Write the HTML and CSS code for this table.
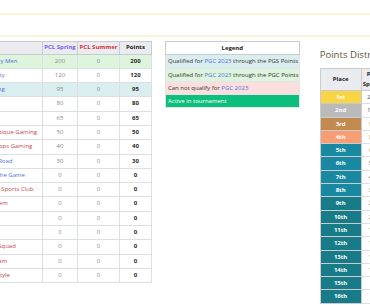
FILE: index.html
```html
<!DOCTYPE html>
<html>
<head>
<meta charset="utf-8">
<link rel="stylesheet" href="styles.css">
</head>
<body>
<div class="notice"></div>
<div class="layout">
  <table class="standings">
    <colgroup><col class="c-team"><col class="c-spring"><col class="c-summer"><col class="c-pts"></colgroup>
    <thead>
      <tr><th class="team">Team</th><th class="spring">PCL Spring</th><th class="summer">PCL Summer</th><th>Points</th></tr>
    </thead>
    <tbody>
      <tr class="bg-pgc"><td class="team"><span class="lk">The Hungry Men</span></td><td>200</td><td>0</td><td class="pts">200</td></tr>
      <tr><td class="team"><span class="lk visited">Old Dynasty</span></td><td>120</td><td>0</td><td class="pts">120</td></tr>
      <tr class="bg-pgs"><td class="team"><span class="lk">Team Rising</span></td><td>95</td><td>0</td><td class="pts">95</td></tr>
      <tr><td class="team"><span class="lk">Vortex</span></td><td>80</td><td>0</td><td class="pts">80</td></tr>
      <tr><td class="team"><span class="lk">Tempo</span></td><td>65</td><td>0</td><td class="pts">65</td></tr>
      <tr><td class="team"><span class="lk new">Team Mystique Gaming</span></td><td>50</td><td>0</td><td class="pts">50</td></tr>
      <tr><td class="team"><span class="lk new">Storm Troops Gaming</span></td><td>40</td><td>0</td><td class="pts">40</td></tr>
      <tr><td class="team"><span class="lk">The Long Road</span></td><td>30</td><td>0</td><td class="pts">30</td></tr>
      <tr><td class="team"><span class="lk">Ahead of the Game</span></td><td>0</td><td>0</td><td class="pts">0</td></tr>
      <tr><td class="team"><span class="lk new">Dragons E-Sports Club</span></td><td>0</td><td>0</td><td class="pts">0</td></tr>
      <tr><td class="team"><span class="lk new">The Requiem</span></td><td>0</td><td>0</td><td class="pts">0</td></tr>
      <tr><td class="team"><span class="lk">Apex</span></td><td>0</td><td>0</td><td class="pts">0</td></tr>
      <tr><td class="team"><span class="lk">Lynx</span></td><td>0</td><td>0</td><td class="pts">0</td></tr>
      <tr><td class="team"><span class="lk new">Phantom Squad</span></td><td>0</td><td>0</td><td class="pts">0</td></tr>
      <tr><td class="team"><span class="lk new">Dream Team</span></td><td>0</td><td>0</td><td class="pts">0</td></tr>
      <tr><td class="team"><span class="lk new">Wild Freestyle</span></td><td>0</td><td>0</td><td class="pts">0</td></tr>
    </tbody>
  </table>

  <table class="legend">
    <thead><tr><th>Legend</th></tr></thead>
    <tbody>
      <tr class="bg-pgs"><td>Qualified for <span class="lk">PGC 2023</span> through the PGS Points</td></tr>
      <tr class="bg-pgc"><td>Qualified for <span class="lk">PGC 2023</span> through the PGC Points</td></tr>
      <tr class="bg-no"><td>Can not qualify for <span class="lk">PGC 2023</span></td></tr>
      <tr class="bg-active"><td>Active in tournament</td></tr>
    </tbody>
  </table>

  <section class="dist">
    <h3 class="dist-title">Points Distribution</h3>
    <table class="places">
      <thead><tr><th class="place">Place</th><th class="val">PCL<br>Spring</th></tr></thead>
      <tbody>
        <tr><td class="place p1">1st</td><td class="val">200</td></tr>
        <tr><td class="place p2">2nd</td><td class="val">120</td></tr>
        <tr><td class="place p3">3rd</td><td class="val hi">95</td></tr>
        <tr><td class="place p4">4th</td><td class="val hi">80</td></tr>
        <tr><td class="place p5">5th</td><td class="val hi">65</td></tr>
        <tr><td class="place p5">6th</td><td class="val">50</td></tr>
        <tr><td class="place p5">7th</td><td class="val">40</td></tr>
        <tr><td class="place p5">8th</td><td class="val">30</td></tr>
        <tr><td class="place p9">9th</td><td class="val">20</td></tr>
        <tr><td class="place p9">10th</td><td class="val">20</td></tr>
        <tr><td class="place p9">11th</td><td class="val">15</td></tr>
        <tr><td class="place p9">12th</td><td class="val">15</td></tr>
        <tr><td class="place p9">13th</td><td class="val">10</td></tr>
        <tr><td class="place p9">14th</td><td class="val">10</td></tr>
        <tr><td class="place p9">15th</td><td class="val">5</td></tr>
        <tr><td class="place p9">16th</td><td class="val">5</td></tr>
      </tbody>
    </table>
  </section>
</div>
</body>
</html>
```
FILE: styles.css
```css
html { overflow: hidden; }
body {
  margin: 0;
  font-family: "Open Sans", "DejaVu Sans", sans-serif;
  font-size: 6px;
  color: #222;
  background: #fff;
}
.notice {
  margin-top: 13px;
  height: 20px;
  border-top: 2px solid #fbf4d6;
  border-bottom: 2px solid #fbf4d6;
}
.layout {
  display: flex;
  align-items: flex-start;
  margin-top: 4px;
}
table {
  border-collapse: collapse;
  border-spacing: 0;
}
th, td { padding: 0; white-space: nowrap; }

/* standings */
.standings {
  table-layout: fixed;
  width: 185px;
  margin-left: -34px;
  flex: none;
  border: 1px solid #c8ccd1;
}
.c-team { width: 76px; }
.c-spring { width: 35px; }
.c-summer { width: 42px; }
.c-pts { width: 32px; }
.standings th {
  background: #eaecf0;
  font-weight: 700;
  line-height: 11.5px;
  border: 1px solid #c8ccd1;
  text-align: center;
}
.standings td {
  line-height: 13.3px;
  border: 1px solid #dcdfe3;
  text-align: center;
  color: #888;
}
.standings .team { text-align: left; padding-left: 4px; overflow: hidden; }
.standings th.spring { color: #7a5cf0; }
.standings th.summer { color: #d1313f; }
.standings td.pts { font-weight: 700; color: #2a2a2a; }

.lk { color: #4f72d8; }
.lk.visited { color: #7c6ad6; }
.lk.new { color: #c04848; }

.bg-pgc td { background: #ddf4dd; }
.bg-pgs td { background: #dbeeef; }
.bg-no td { background: #fbdfdf; }
.bg-active td { background: #0dbf7c; color: #fff; }

/* legend */
.legend {
  flex: none;
  width: 132px;
  margin-left: 13px;
  border: 1px solid #c8ccd1;
}
.legend th {
  font-weight: 700;
  line-height: 12.3px;
  text-align: center;
  background: #fff;
  border: 1px solid #c8ccd1;
}
.legend td {
  line-height: 12.3px;
  padding-left: 2px;
  color: #333;
  border: 1px solid #e2e4e7;
}
.legend .bg-active td { color: #fff; }

/* distribution */
.dist {
  flex: none;
  margin-left: 20px;
}
.dist-title {
  margin: 7px 0 7px 0;
  font-size: 9.6px;
  font-weight: 400;
  color: #5f5446;
  line-height: 13px;
  white-space: nowrap;
}
.places {
  table-layout: fixed;
  width: 64px;
  border: 1px solid #c8ccd1;
}
.places th {
  background: #eaecf0;
  font-weight: 700;
  line-height: 9.5px;
  padding: 1px 0;
  text-align: center;
  border: 1px solid #c8ccd1;
}
.places th.place { width: 40px; }
.places td {
  line-height: 12.3px;
  text-align: center;
  border: 1px solid #dcdfe3;
  color: #555;
}
.places td.place {
  color: #fff;
  font-weight: 700;
  border-color: #c8ccd1;
}
.places td.val.hi { color: #e0955a; }
.p1 { background: #f9d443; }
.p2 { background: #bababa; }
.p3 { background: #c38a4f; }
.p4 { background: #f99d72; }
.p5 { background: #1889a0; }
.p9 { background: #177b88; }
```
